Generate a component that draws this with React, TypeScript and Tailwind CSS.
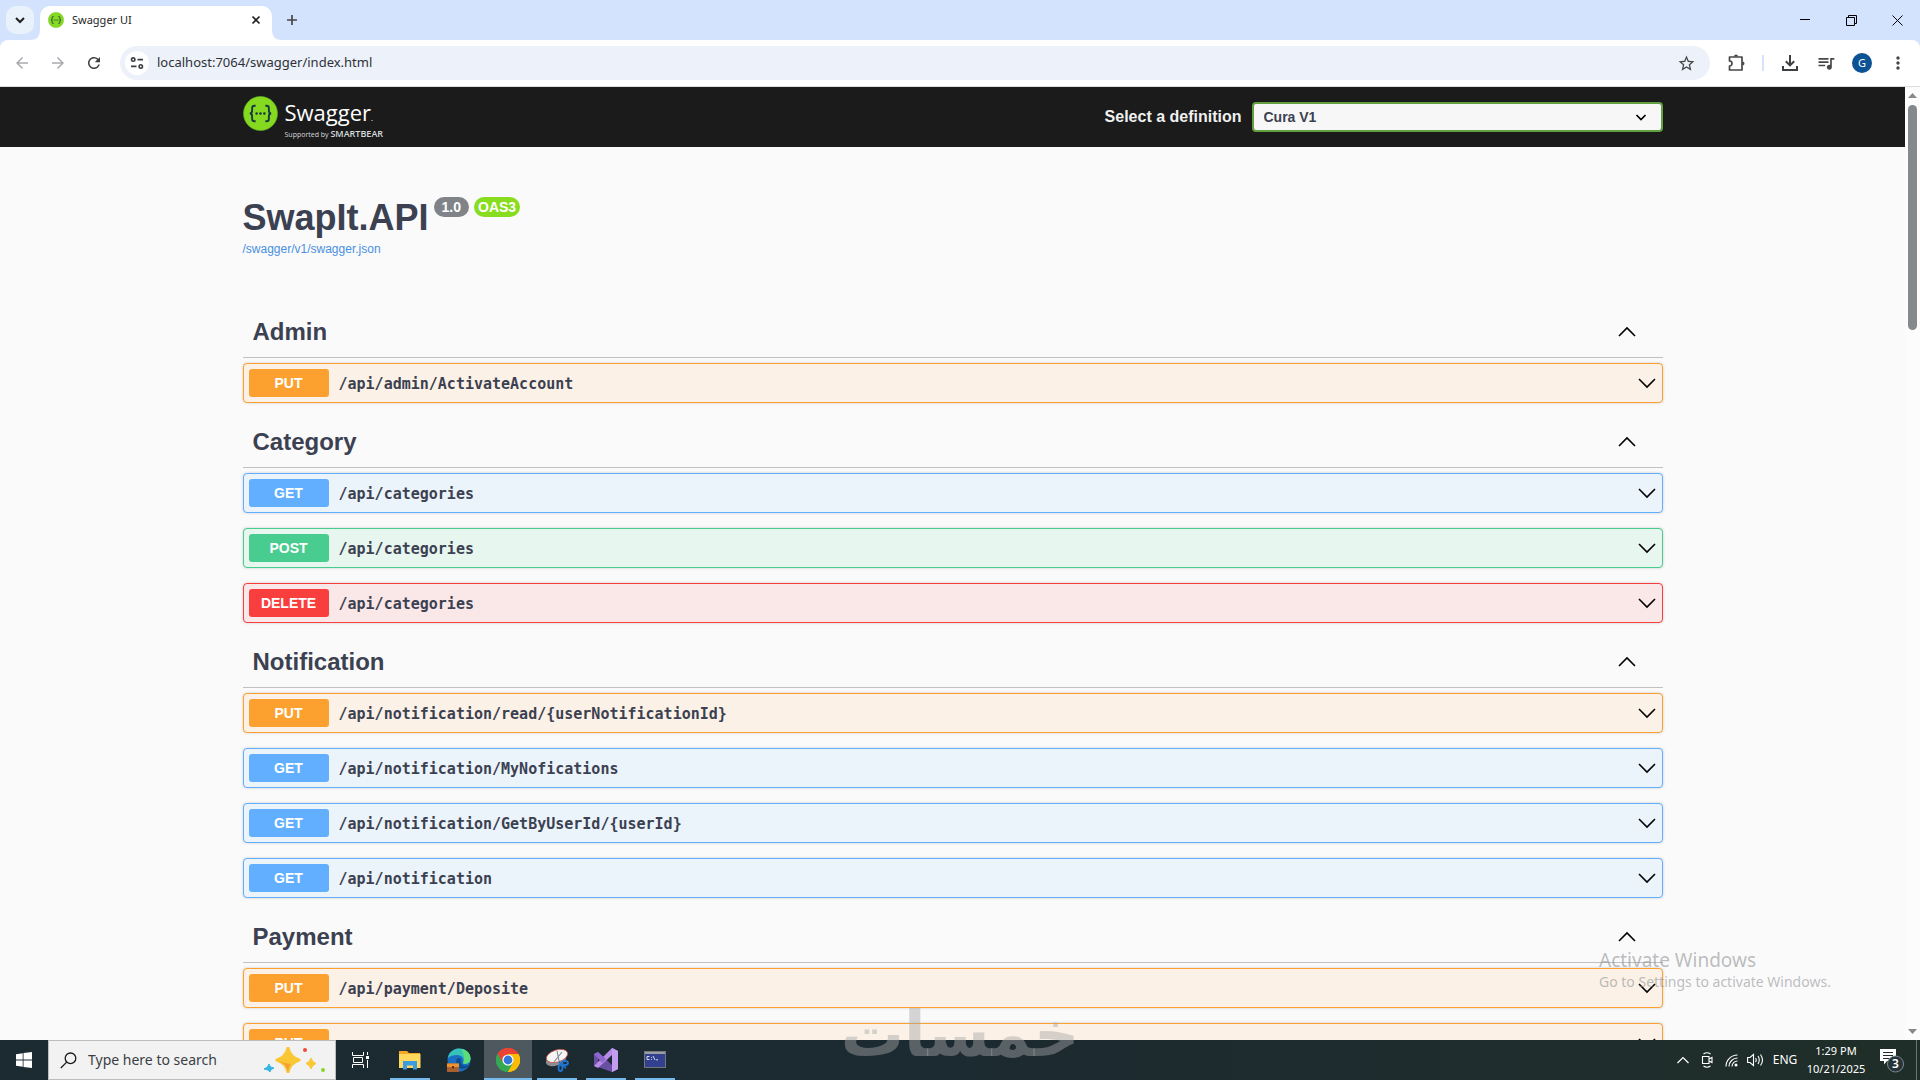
import React, { useState } from "react";
import {
  MdArrowBack,
  MdArrowForward,
  MdMoreVert,
  MdQueueMusic,
  MdRefresh,
  MdStarBorder,
} from "react-icons/md";

type Method = "GET" | "POST" | "PUT" | "DELETE";

type Operation = {
  method: Method;
  path: string;
};

type TagSection = {
  name: string;
  operations: Operation[];
};

const sections: TagSection[] = [
  {
    name: "Admin",
    operations: [{ method: "PUT", path: "/api/admin/ActivateAccount" }],
  },
  {
    name: "Category",
    operations: [
      { method: "GET", path: "/api/categories" },
      { method: "POST", path: "/api/categories" },
      { method: "DELETE", path: "/api/categories" },
    ],
  },
  {
    name: "Notification",
    operations: [
      { method: "PUT", path: "/api/notification/read/{userNotificationId}" },
      { method: "GET", path: "/api/notification/MyNofications" },
      { method: "GET", path: "/api/notification/GetByUserId/{userId}" },
      { method: "GET", path: "/api/notification" },
    ],
  },
  {
    name: "Payment",
    operations: [
      { method: "PUT", path: "/api/payment/Deposite" },
      { method: "PUT", path: "" },
    ],
  },
];

const blockClass: Record<Method, string> = {
  GET: "border-[#61affe] bg-[#ebf3fb]",
  POST: "border-[#49cc90] bg-[#e8f6f0]",
  PUT: "border-[#fca130] bg-[#fbf1e6]",
  DELETE: "border-[#f93e3e] bg-[#fae7e7]",
};

const badgeClass: Record<Method, string> = {
  GET: "bg-[#61affe]",
  POST: "bg-[#49cc90]",
  PUT: "bg-[#fca130]",
  DELETE: "bg-[#f93e3e]",
};

const Chevron = ({ up = false }: { up?: boolean }) => (
  <svg viewBox="0 0 20 20" className="size-5" fill="none" stroke="black" strokeWidth="1.6">
    {up ? <path d="M2 14 L10 6 L18 14" /> : <path d="M2 6 L10 14 L18 6" />}
  </svg>
);

const SwaggerMark = ({ className }: { className: string }) => (
  <svg viewBox="0 0 36 36" className={className} fill="none">
    <circle cx="18" cy="18" r="17.5" fill="#85d91f" stroke="#5fb52a" strokeWidth="0.6" />
    <g stroke="#173647" strokeWidth="1.9">
      <path d="M13 10 h-1.2 q-2.4 0 -2.4 2.4 v2.6 q0 3 -2.4 3 q2.4 0 2.4 3 v2.6 q0 2.4 2.4 2.4 H13" />
      <path d="M23 10 h1.2 q2.4 0 2.4 2.4 v2.6 q0 3 2.4 3 q-2.4 0 -2.4 3 v2.6 q0 2.4 -2.4 2.4 H23" />
    </g>
    <g fill="#173647">
      <circle cx="14" cy="18" r="1.3" />
      <circle cx="18" cy="18" r="1.3" />
      <circle cx="22" cy="18" r="1.3" />
    </g>
  </svg>
);

const TabStrip = () => (
  <div className="flex h-10 shrink-0 items-start bg-[#d3e3fd] pl-1.5">
    <button aria-label="Search tabs" className="mt-1.5 flex size-7 items-center justify-center rounded-[10px] bg-[#e9f2fb]">
      <svg viewBox="0 0 12 12" className="size-3" fill="none" stroke="#1f1f1f" strokeWidth="2">
        <path d="M2 4 L6 8 L10 4" />
      </svg>
    </button>

    <div className="relative mt-1.5 ml-1.5 flex h-[34px] w-[232px] items-center rounded-t-[10px] bg-white pr-2 pb-1.5 pl-2">
      <svg viewBox="0 0 10 10" className="absolute bottom-0 -left-2.5 size-2.5" fill="white">
        <path d="M10 0 V10 H0 Q10 10 10 0 Z" />
      </svg>
      <svg viewBox="0 0 10 10" className="absolute -right-2.5 bottom-0 size-2.5" fill="white">
        <path d="M0 0 V10 H10 Q0 10 0 0 Z" />
      </svg>
      <SwaggerMark className="size-4" />
      <span className="ml-2 flex-1 text-[11px] text-[#1f1f1f]">Swagger UI</span>
      <button aria-label="Close tab" className="flex size-4 items-center justify-center">
        <svg viewBox="0 0 10 10" className="size-2.5" stroke="#1f1f1f" strokeWidth="1.6">
          <path d="M1.5 1.5 L8.5 8.5 M8.5 1.5 L1.5 8.5" />
        </svg>
      </button>
    </div>

    <button aria-label="New tab" className="mt-1.5 ml-1.5 flex size-7 items-center justify-center">
      <svg viewBox="0 0 12 12" className="size-3" stroke="#474747" strokeWidth="1.7">
        <path d="M6 1 V11 M1 6 H11" />
      </svg>
    </button>

    <div className="ml-auto flex">
      <button aria-label="Minimize" className="flex h-10 w-[46px] items-center justify-center">
        <svg viewBox="0 0 10 10" className="size-2.5" stroke="black">
          <path d="M0 4.5 H10" />
        </svg>
      </button>
      <button aria-label="Restore" className="flex h-10 w-[46px] items-center justify-center">
        <svg viewBox="0 0 11 11" className="size-[11px]" fill="none" stroke="black">
          <path d="M0.5 2.5 H8.5 V10.5 H0.5 Z M2.5 2.5 V0.5 H10.5 V8.5 H8.5" />
        </svg>
      </button>
      <button aria-label="Close" className="flex h-10 w-[46px] items-center justify-center">
        <svg viewBox="0 0 11 11" className="size-[11px]" stroke="black">
          <path d="M0.5 0.5 L10.5 10.5 M10.5 0.5 L0.5 10.5" />
        </svg>
      </button>
    </div>
  </div>
);

const Toolbar = () => {
  const [url, setUrl] = useState("localhost:7064/swagger/index.html");

  return (
    <div className="shrink-0 bg-[#d3e3fd]">
      <div className="flex h-[47px] items-center rounded-t-lg border-b border-[#dadce0] bg-white px-2">
        <div className="flex gap-2">
          <button aria-label="Back" className="flex size-7 items-center justify-center text-[#a9abae]">
            <MdArrowBack size={18} />
          </button>
          <button aria-label="Forward" className="flex size-7 items-center justify-center text-[#a9abae]">
            <MdArrowForward size={18} />
          </button>
          <button aria-label="Reload" className="flex size-7 items-center justify-center text-[#3c4043]">
            <MdRefresh size={18} />
          </button>
        </div>

        <div className="ml-3 flex h-[34px] flex-1 items-center rounded-full bg-[#edf1fa] pr-3.5 pl-[5px]">
          <button aria-label="Site information" className="flex size-6 items-center justify-center rounded-full bg-white">
            <svg viewBox="0 0 14 14" className="size-3.5" fill="none" stroke="#3c4043" strokeWidth="1.6">
              <circle cx="3.2" cy="3.6" r="1.7" />
              <path d="M7.5 3.6 H13 M1 10.4 H6.5" />
              <circle cx="10.8" cy="10.4" r="1.7" />
            </svg>
          </button>
          <input
            aria-label="Address"
            value={url}
            onChange={(e) => setUrl(e.target.value)}
            className="ml-2 flex-1 bg-transparent text-[13px] text-[#2d3137] outline-none"
          />
          <button aria-label="Bookmark this tab" className="text-[#474747]">
            <MdStarBorder size={19} />
          </button>
        </div>

        <div className="ml-3 flex items-center gap-2 text-[#474747]">
          <button aria-label="Extensions" className="flex size-7 items-center justify-center">
            <svg viewBox="0 0 20 20" className="size-5" fill="#474747">
              <path
                d="M3.5 4 H16 V17 H3.5 V13 A2.4 2.4 0 0 0 3.5 8 Z"
                fill="none"
                stroke="#474747"
                strokeWidth="1.7"
                strokeLinejoin="round"
              />
              <path d="M8 3.5 A2 2 0 0 1 12 3.5 Z M16.5 8.5 A2 2 0 0 1 16.5 12.5 Z" />
            </svg>
          </button>
          <span className="mx-1 h-4 w-0.5 bg-[#d3e3fd]" />
          <button aria-label="Downloads" className="flex size-7 items-center justify-center">
            <svg viewBox="0 0 18 18" className="size-[18px]" fill="none" stroke="#3c4043" strokeWidth="2">
              <path d="M9 1 V11 M4.8 7.2 L9 11.4 L13.2 7.2 M2 12 V16 H16 V12" />
            </svg>
          </button>
          <button aria-label="Media controls" className="flex size-7 items-center justify-center">
            <MdQueueMusic size={20} />
          </button>
          <button aria-label="Profile" className="flex size-7 items-center justify-center">
            <span className="flex size-5 items-center justify-center rounded-full bg-[#0b5394] text-[11px] text-white">G</span>
          </button>
          <button aria-label="Menu" className="flex size-7 items-center justify-center">
            <MdMoreVert size={20} />
          </button>
        </div>
      </div>
    </div>
  );
};

const Topbar = () => (
  <header className="h-[60px] bg-[#1b1b1b]">
    <div className="mx-auto flex h-full max-w-[1460px] items-center px-5">
      <a href="#" className="flex gap-[7px]">
        <SwaggerMark className="size-[35px]" />
        <span className="flex flex-col pt-1 font-['Open_Sans',sans-serif] text-white">
          <span className="text-[22px] leading-6">
            Swagger<span className="text-[8px]">.</span>
          </span>
          <span className="text-[7px] leading-2 text-[#d5dadd]">
            Supported by <span className="text-[9px] font-semibold">SMARTBEAR</span>
          </span>
        </span>
      </a>
      <label htmlFor="definition" className="ml-auto text-base font-bold text-[#f0f0f0]">
        Select a definition
      </label>
      <div className="relative ml-2.5 w-[411px]">
        <select
          id="definition"
          className="h-[30px] w-full appearance-none rounded border-2 border-[#62a03f] bg-[#f7f7f7] px-2.5 text-sm font-bold text-[#3b4151]"
        >
          <option>Cura V1</option>
        </select>
        <svg
          viewBox="0 0 12 12"
          className="pointer-events-none absolute top-[9px] right-4 size-3"
          fill="none"
          stroke="black"
          strokeWidth="1.7"
        >
          <path d="M1.5 4 L6 8.5 L10.5 4" />
        </svg>
      </div>
    </div>
  </header>
);

const OperationBlock: React.FC<Operation> = ({ method, path }) => (
  <button
    className={`mb-[15px] flex h-10 w-full items-center rounded border px-[5px] text-left shadow-[0_0_3px_rgba(0,0,0,0.19)] ${blockClass[method]}`}
  >
    <span className={`w-20 rounded-[3px] text-center text-sm leading-7 font-bold text-white ${badgeClass[method]}`}>
      {method}
    </span>
    <span className="flex-1 px-2.5 pt-0.5 font-['DejaVu_Sans_Mono',monospace] text-[15px] font-bold">{path}</span>
    <Chevron />
  </button>
);

const SwaggerPage = () => (
  <main className="min-w-0 flex-1 overflow-hidden bg-[#fafafa] font-['Liberation_Sans',Arial,sans-serif] text-[#3b4151]">
    <Topbar />
    <div className="mx-auto max-w-[1460px] px-5">
      <div className="mb-[51px] pt-[50px]">
        <div className="mb-0.5 flex items-start">
          <h1 className="text-4xl leading-[42px] font-bold">SwapIt.API</h1>
          <span className="ml-[5px] rounded-full bg-[#808489] px-2 text-sm leading-5 font-bold text-white">1.0</span>
          <span className="ml-[5px] rounded-full bg-[#89dd1f] px-1 text-sm leading-5 font-bold text-white">OAS3</span>
        </div>
        <a href="#" className="block text-xs leading-4 text-[#4990e2]">
          /swagger/v1/swagger.json
        </a>
      </div>

      {sections.map((section) => (
        <section key={section.name}>
          <h2 className="mb-[5px] flex h-[50px] items-center justify-between border-b border-[#bfc1c4] pr-[26px] pb-px pl-2.5 text-2xl font-bold">
            {section.name}
            <button aria-label={`Collapse ${section.name}`}>
              <Chevron up />
            </button>
          </h2>
          {section.operations.map((op, i) => (
            <OperationBlock key={i} {...op} />
          ))}
        </section>
      ))}
    </div>
  </main>
);

const Scrollbar = () => (
  <div className="flex w-[15px] flex-col items-center justify-between bg-[#fcfcfc] py-1.5">
    <div className="flex flex-col items-center gap-[7px]">
      <svg viewBox="0 0 9 5" className="h-[5px] w-[9px]" fill="#85888c">
        <path d="M0 5 L4.5 0 L9 5 Z" />
      </svg>
      <div className="h-[225px] w-[9px] rounded-full bg-[#85888c]" />
    </div>
    <svg viewBox="0 0 9 5" className="h-[5px] w-[9px]" fill="#85888c">
      <path d="M0 0 L4.5 5 L9 0 Z" />
    </svg>
  </div>
);

const ExplorerIcon = () => (
  <svg viewBox="0 0 24 24" className="size-6">
    <path d="M1 3 h8 l2 2 h11 v5 H1 Z" fill="#f5a623" />
    <path d="M1 6 H22.5 V20 H1 Z" fill="#ffd75e" />
    <path d="M5 13 h14 v8.5 h-4 v-4 h-6 v4 h-4 Z" fill="#3d9be0" />
  </svg>
);

const EdgeIcon = () => (
  <svg viewBox="0 0 24 24" className="size-6">
    <circle cx="12" cy="12" r="11.5" fill="#1b6fc2" />
    <path d="M1 10 C2 3 8 0.5 12 0.5 C19 0.5 23.5 5.5 23.5 10.5 C23.5 15 19.5 16.5 16 15.5 C18 11 15 7 10 7 C6 7 3 8 1 10 Z" fill="#37c2b8" />
    <path d="M14 1 C20 1.5 23.5 5.5 23.5 10.5 C23.5 15 19.5 16.5 16 15.5 C18 11 17 5 14 1 Z" fill="#5ddc7c" />
    <path d="M9 14 C9 9 14 9 14 12 C13 17 18 19 22 17 C19 23 10 22 9 14 Z" fill="#0d4f94" />
    <path d="M0 15.5 H12 V24 H0 Z" fill="#a9602f" />
    <path d="M0 15.5 H12 V19 H0 Z" fill="#f0922b" />
    <path d="M5 18 h2 v2.5 h-2 Z" fill="#5f3312" />
  </svg>
);

const ChromeIcon = () => (
  <svg viewBox="0 0 24 24" className="size-6">
    <path d="M12 12 L1.6 6 A12 12 0 0 1 22.4 6 Z" fill="#ea4335" />
    <path d="M12 12 L22.4 6 A12 12 0 0 1 12 24 Z" fill="#fbbc05" />
    <path d="M12 12 L12 24 A12 12 0 0 1 1.6 6 Z" fill="#34a853" />
    <path d="M1.6 6 A12 12 0 0 1 22.4 6 H12 L6.8 9 L6.8 15 Z" fill="#ea4335" />
    <path d="M1.6 6 L6.8 15 L12 18 L17.2 15 L12 24 A12 12 0 0 1 1.6 6 Z" fill="#34a853" />
    <path d="M12 6 H22.4 A12 12 0 0 1 12 24 L17.2 15 Z" fill="#fbbc05" />
    <circle cx="12" cy="12" r="5.6" fill="white" />
    <circle cx="12" cy="12" r="4.4" fill="#2f78d8" />
  </svg>
);

const SnippingIcon = () => (
  <svg viewBox="0 0 24 24" className="size-6">
    <ellipse cx="11" cy="12" rx="10.5" ry="5.5" transform="rotate(-18 11 12)" fill="#8b8e92" />
    <ellipse cx="12" cy="8" rx="11" ry="6" transform="rotate(-18 12 8)" fill="#f5f5f5" stroke="#c9483a" strokeWidth="0.7" />
    <path d="M12 3 L14.5 15 M17 4 L9 14" stroke="#7e8790" strokeWidth="1.1" />
    <g fill="none" stroke="#1f74cf" strokeWidth="1.8">
      <ellipse cx="20" cy="15" rx="3" ry="2" />
      <ellipse cx="15.5" cy="20" rx="2" ry="3" />
      <path d="M14 14 L21 20" />
    </g>
  </svg>
);

const VisualStudioIcon = () => (
  <svg viewBox="0 0 24 24" className="size-6">
    <path d="M0 6 L4 4 L18 17 V24 L4 19 L0 18 Z" fill="#6a4fa3" />
    <path d="M4 9 V15 L7 12 Z" fill="#1c2b31" />
    <path d="M18 0 L24 3 V21 L18 24 V7 L4 20 L0 18 Z" fill="#b98be8" />
    <path d="M18 0 L24 3 V21 L18 24 Z" fill="#c49cf0" />
    <path d="M0 6 L4 4 L12 11 L8 15 Z" fill="#8d66cf" />
  </svg>
);

const TerminalIcon = () => (
  <svg viewBox="0 0 22 18" className="h-[18px] w-[22px]">
    <rect x="0.5" y="0.5" width="21" height="16" fill="#33408f" stroke="#74787c" />
    <rect x="1" y="1" width="20" height="2" fill="#9a9da2" />
    <path d="M5.5 5.5 H3 V8.5 H5.5 M7.5 6 V6.8 M7.5 8 V8.8 M9 5 L11 9 M12 8.8 H14" stroke="#e6e8f5" strokeWidth="0.9" fill="none" />
  </svg>
);

const TaskButton: React.FC<{ label: string; open?: boolean; active?: boolean; children: React.ReactNode }> = ({
  label,
  open,
  active,
  children,
}) => (
  <button
    aria-label={label}
    className={`flex h-10 w-12 flex-col items-center justify-between ${active ? "bg-[#4d595f]" : ""}`}
  >
    <span className="flex flex-1 items-center pt-0.5">{children}</span>
    <span className={`h-0.5 ${active ? "w-full" : "w-10"} ${open ? "bg-[#76b9ed]" : ""}`} />
  </button>
);

const Taskbar = () => (
  <footer className="flex h-10 shrink-0 items-center bg-linear-to-r from-[#1b2b31] via-[#1c2a31] to-[#202e29] text-white">
    <button aria-label="Start" className="flex h-10 w-12 items-center justify-center">
      <svg viewBox="0 0 16 16" className="size-4" fill="white">
        <path d="M0 2.2 L6.7 1.2 V7.6 H0 Z M7.5 1.1 L16 0 V7.6 H7.5 Z M0 8.4 H6.7 V14.8 L0 13.8 Z M7.5 8.4 H16 V16 L7.5 14.9 Z" />
      </svg>
    </button>

    <div className="flex h-10 w-72 items-center border border-[#bdbdbd] bg-[#f2f2f2] pr-2.5 pl-[11px]">
      <svg viewBox="0 0 17 17" className="size-[17px]" fill="none" stroke="#1a1a1a" strokeWidth="1.3">
        <circle cx="10.5" cy="6.3" r="5.3" />
        <path d="M6.7 10.1 L0.8 16" />
      </svg>
      <input
        aria-label="Search"
        placeholder="Type here to search"
        className="ml-[11px] w-40 bg-transparent text-sm outline-none placeholder:text-[#3a3f44]"
      />
      <svg viewBox="0 0 62 26" className="ml-auto h-[26px] w-[62px]">
        <path d="M25 1 Q27 10 36 13 Q27 16 25 25 Q23 16 14 13 Q23 10 25 1 Z" fill="#f9c734" stroke="#f9c734" strokeWidth="3" strokeLinejoin="round" />
        <path d="M14 13 Q23 16 25 25 Q26 19 28 17 Q20 16 14 13 Z" fill="#f5a031" />
        <path d="M48 11 Q49 15 53 16.5 Q49 18 48 22 Q47 18 43 16.5 Q47 15 48 11 Z" fill="#f9c734" stroke="#f9c734" />
        <path d="M6 17 L7.5 20 L11 21 L8 22.5 L7 25 L5 23 L1 22 L4.5 20 Z" fill="#35b5e5" stroke="#35b5e5" />
        <circle cx="42" cy="3" r="2" fill="#ef4b3c" />
        <circle cx="60" cy="23" r="2" fill="#8bd42e" />
      </svg>
    </div>

    <TaskButton label="Task View">
      <svg viewBox="0 0 17 16" className="h-4 w-[17px]" fill="none" stroke="white">
        <path d="M0.5 0 V3.5 H11.5 V0 M0.5 16 V12.5 H11.5 V16 M1.5 5.5 H10.5 V10.5 H1.5 Z M15.5 0 V3 M15.5 8 V16" />
        <path d="M14 4 h3 v3 h-3 Z" fill="white" stroke="none" />
      </svg>
    </TaskButton>
    <div className="ml-0.5 flex gap-px">
      <TaskButton label="File Explorer" open>
        <ExplorerIcon />
      </TaskButton>
      <TaskButton label="Edge">
        <EdgeIcon />
      </TaskButton>
      <TaskButton label="Chrome" open active>
        <ChromeIcon />
      </TaskButton>
      <TaskButton label="Snipping Tool" open>
        <SnippingIcon />
      </TaskButton>
      <TaskButton label="Visual Studio" open>
        <VisualStudioIcon />
      </TaskButton>
      <TaskButton label="Command Prompt" open>
        <TerminalIcon />
      </TaskButton>
    </div>

    <div className="ml-auto flex items-center pr-[3px]">
      <button aria-label="Show hidden icons" className="flex w-6 justify-center">
        <svg viewBox="0 0 12 8" className="h-2 w-3" fill="none" stroke="white" strokeWidth="1.2">
          <path d="M0.5 7 L6 1.5 L11.5 7" />
        </svg>
      </button>
      <button aria-label="Meet Now" className="flex w-6 justify-center">
        <svg viewBox="0 0 12 16" className="h-4 w-3" fill="none" stroke="white" strokeWidth="1.1">
          <path d="M2.5 2 Q6 -0.5 9.5 2 M2.5 14 Q6 16.5 9.5 14 M1.5 4.5 H8 V11.5 H1.5 Z M8 7 L11 5.5 V10.5 L8 9" />
        </svg>
      </button>
      <button aria-label="Network" className="flex w-6 justify-center">
        <svg viewBox="0 0 13 13" className="size-[13px]" fill="none" stroke="white" strokeWidth="1.1">
          <path d="M1 12.5 A11.5 11.5 0 0 1 12.5 1 M4 12.5 A8.5 8.5 0 0 1 12.5 4 M7 12.5 A5.5 5.5 0 0 1 12.5 7" />
          <circle cx="11" cy="11" r="1.5" fill="white" stroke="none" />
        </svg>
      </button>
      <button aria-label="Volume" className="flex w-6 justify-center">
        <svg viewBox="0 0 17 14" className="h-3.5 w-[17px]" fill="none" stroke="white" strokeWidth="1.1">
          <path d="M0.6 4.5 H3 L6.5 1.5 V12.5 L3 9.5 H0.6 Z M8.5 5 Q10 7 8.5 9 M11 3 Q13.5 7 11 11 M13.5 1.5 Q17.5 7 13.5 12.5" />
        </svg>
      </button>
      <button className="w-9 text-center text-xs">ENG</button>
      <button className="w-[66px] text-center text-[11px] leading-[18px] whitespace-nowrap">
        1:29 PM
        <br />
        10/21/2025
      </button>
      <button aria-label="3 new notifications" className="flex h-10 w-[47px] items-center justify-center">
        <svg viewBox="0 0 25 26" className="h-[26px] w-[25px]">
          <path d="M0 2 H16 V14 H7 L4 17.5 V14 H0 Z" fill="white" />
          <path d="M3 5.5 H13 M3 8.5 H13 M3 11.5 H9" stroke="#202e29" strokeWidth="1.1" />
          <circle cx="15.5" cy="17" r="8" fill="#263337" stroke="#7b8a94" />
          <text x="15.5" y="21" textAnchor="middle" fontSize="12" fontWeight="600" fill="white">
            3
          </text>
        </svg>
      </button>
      <span className="h-10 w-px bg-[#6c7674]" />
    </div>
  </footer>
);

const App = () => (
  <div className="relative flex h-screen flex-col overflow-hidden font-['Noto_Sans',sans-serif]">
    <TabStrip />
    <Toolbar />
    <div className="flex min-h-0 flex-1">
      <SwaggerPage />
      <Scrollbar />
    </div>
    <Taskbar />

    {/* watermarks laid over the desktop */}
    <div className="pointer-events-none absolute right-20 bottom-[88px] w-[241px] whitespace-nowrap text-[#85888c]/55">
      <p className="text-[19px] leading-6">Activate Windows</p>
      <p className="text-sm leading-5">Go to Settings to activate Windows.</p>
    </div>
    <div
      dir="rtl"
      className="pointer-events-none absolute inset-x-0 bottom-0 text-center font-['DejaVu_Sans',sans-serif] text-[63px] leading-[90px] font-bold text-[#a6a6a6]/45"
    >
      خمسات
    </div>
  </div>
);

export default App;
